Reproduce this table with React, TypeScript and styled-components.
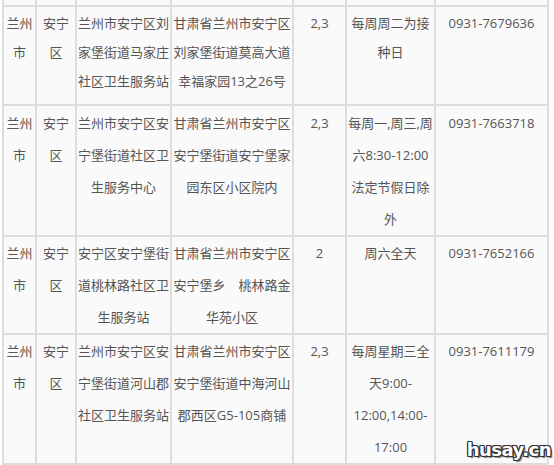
import React from 'react';
import styled, { createGlobalStyle } from 'styled-components';

const GlobalStyle = createGlobalStyle`
  html, body {
    margin: 0;
    padding: 0;
    background: #ffffff;
  }
  body {
    font-family: "Open Sans", "Noto Sans CJK SC", sans-serif;
  }
`;

const Page = styled.div`
  position: relative;
  width: 554px;
  height: 465px;
  overflow: hidden;
  padding-left: 2px;
  box-sizing: border-box;
`;

const Grid = styled.div`
  display: grid;
  grid-template-columns: 31px 38px 93px 120px 51px 87px 111px;
  grid-template-rows: 5px;
  gap: 2px;
  padding: 0 2px 2px 2px;
  background: #dddddd;
  width: max-content;
`;

const Stub = styled.div`
  background: #fafafa;
`;

const Cell = styled.div<{ $height: number; $lh: number; $pad: number }>`
  background: #fafafa;
  color: #555555;
  font-size: 13px;
  line-height: ${(p) => p.$lh}px;
  text-align: center;
  white-space: nowrap;
  padding-top: ${(p) => p.$pad}px;
  box-sizing: border-box;
  min-height: ${(p) => p.$height}px;
`;

const Watermark = styled.div`
  position: absolute;
  right: 3px;
  bottom: 5px;
  font-family: "DejaVu Sans", sans-serif;
  font-weight: bold;
  font-size: 18px;
  letter-spacing: -0.5px;
  color: #ffffff;
  text-shadow:
    -1px -1px 0 #333, 1px -1px 0 #333, -1px 1px 0 #333, 1px 1px 0 #333,
    0 -1px 0 #333, 0 1px 0 #333, -1px 0 0 #333, 1px 0 0 #333,
    2px 2px 1px rgba(0, 0, 0, 0.5);
`;

type Row = { height: number; lh: number; pad: number; cells: string[][] };

const rows: Row[] = [
  {
    height: 97,
    lh: 29,
    pad: 2,
    cells: [
      ['兰州', '市'],
      ['安宁', '区'],
      ['兰州市安宁区刘', '家堡街道马家庄', '社区卫生服务站'],
      ['甘肃省兰州市安宁区', '刘家堡街道莫高大道', '幸福家园13之26号'],
      ['2,3'],
      ['每周周二为接', '种日'],
      ['0931-7679636'],
    ],
  },
  {
    height: 129,
    lh: 32,
    pad: 1,
    cells: [
      ['兰州', '市'],
      ['安宁', '区'],
      ['兰州市安宁区安', '宁堡街道社区卫', '生服务中心'],
      ['甘肃省兰州市安宁区', '安宁堡街道安宁堡家', '园东区小区院内'],
      ['2,3'],
      ['每周一,周三,周', '六8:30-12:00', '法定节假日除', '外'],
      ['0931-7663718'],
    ],
  },
  {
    height: 96,
    lh: 32,
    pad: 0,
    cells: [
      ['兰州', '市'],
      ['安宁', '区'],
      ['安宁区安宁堡街', '道桃林路社区卫', '生服务站'],
      ['甘肃省兰州市安宁区', '安宁堡乡　桃林路金', '华苑小区'],
      ['2'],
      ['周六全天'],
      ['0931-7652166'],
    ],
  },
  {
    height: 128,
    lh: 32,
    pad: 0,
    cells: [
      ['兰州', '市'],
      ['安宁', '区'],
      ['兰州市安宁区安', '宁堡街道河山郡', '社区卫生服务站'],
      ['甘肃省兰州市安宁区', '安宁堡街道中海河山', '郡西区G5-105商铺'],
      ['2,3'],
      ['每周星期三全', '天9:00-', '12:00,14:00-', '17:00'],
      ['0931-7611179'],
    ],
  },
];

export default function App() {
  return (
    <>
      <GlobalStyle />
      <Page>
        <Grid>
          {Array.from({ length: 7 }).map((_, i) => (
            <Stub key={`s${i}`} />
          ))}
          {rows.map((row, r) =>
            row.cells.map((lines, c) => (
              <Cell key={`${r}-${c}`} $height={row.height} $lh={row.lh} $pad={row.pad}>
                {lines.map((l, i) => (
                  <React.Fragment key={i}>
                    {i > 0 && <br />}
                    {l}
                  </React.Fragment>
                ))}
              </Cell>
            ))
          )}
        </Grid>
        <Watermark>husay.cn</Watermark>
      </Page>
    </>
  );
}
